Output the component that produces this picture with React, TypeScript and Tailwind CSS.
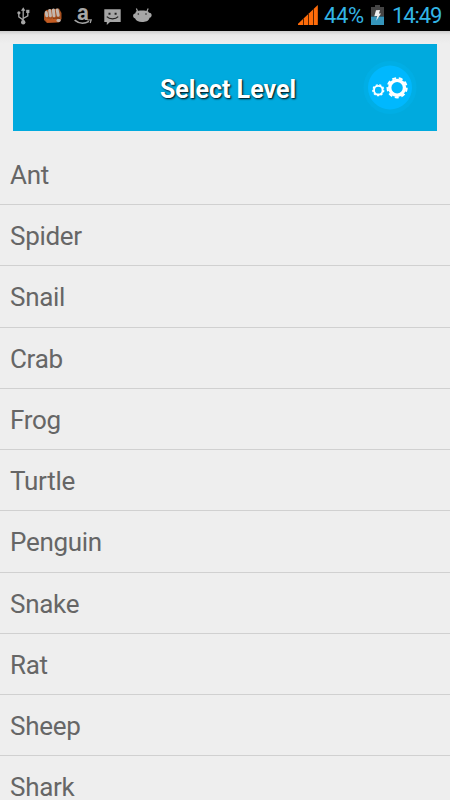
const levels = [
  "Ant",
  "Spider",
  "Snail",
  "Crab",
  "Frog",
  "Turtle",
  "Penguin",
  "Snake",
  "Rat",
  "Sheep",
  "Shark",
];

function UsbIcon() {
  return (
    <svg width="14" height="18" viewBox="0 0 14 18" fill="none" stroke="#a6a6a6" strokeWidth="1.3">
      <path d="M6.2 14V3M6.2 13L1.8 9.8V6M6.2 11.5L10.8 8.8V4.5" />
      <path d="M4 3.8L6.2 0.3L8.4 3.8Z" fill="#a6a6a6" stroke="none" />
      <circle cx="1.9" cy="5.8" r="1.6" fill="#a6a6a6" stroke="none" />
      <rect x="9.2" y="2.8" width="3.2" height="3.2" fill="#a6a6a6" stroke="none" />
      <circle cx="6.2" cy="15.2" r="2.2" fill="#a6a6a6" stroke="none" />
    </svg>
  );
}

function FistIcon() {
  return (
    <svg width="20" height="16" viewBox="0 0 20 16">
      <path d="M1 6L3 2L16 0.5L18.5 5V11L16 14.5L4 15L1 12Z" fill="#a8501f" />
      <path d="M2 10L8 11.5L12 9L14 14L4 14.5Z" fill="#c45c22" />
      <g stroke="#c3b6ad" strokeWidth="3" strokeLinecap="round">
        <path d="M3.2 4.5L3.8 7.8M6.7 2.5L7.4 7.8M10.4 2L11 7.8M14.2 2L15.2 7.3" />
      </g>
      <path d="M14.8 12.5H16.3" stroke="#c3b6ad" strokeWidth="2.8" strokeLinecap="round" />
      <path d="M10 10.5L15 9.8L17 10.5" stroke="#73330f" strokeWidth="0.8" fill="none" />
    </svg>
  );
}

function AmazonIcon() {
  return (
    <div className="flex w-[18px] flex-col">
      <span className="pl-[3px] font-[Roboto,sans-serif] text-[22px] font-bold leading-[11px] text-[#a6a6a6]">
        a
      </span>
      <svg className="mt-px" width="18" height="6" viewBox="0 0 18 6">
        <path d="M0.6 1.2C5 4.8 10.5 5 15 2.4" fill="none" stroke="#a6a6a6" strokeWidth="1.5" />
        <path d="M13.3 1L17.2 0.9L16.2 4" fill="none" stroke="#a6a6a6" strokeWidth="1.2" />
      </svg>
    </div>
  );
}

function MessageIcon() {
  return (
    <svg width="17" height="17" viewBox="0 0 17 17">
      <path d="M0.3 0.3H16.7V13H6L2.8 16V13H0.3Z" fill="#a6a6a6" />
      <path d="M4.5 3.8H6.5V5.8H4.5ZM10.6 3.8H12.6V5.8H10.6Z" fill="#222" />
      <path d="M2.8 7.6C5.5 10.6 11.5 10.6 14.2 7.6" fill="none" stroke="#222" strokeWidth="1.2" />
    </svg>
  );
}

function AndroidIcon() {
  return (
    <svg width="19" height="15" viewBox="0 0 19 15">
      <path
        d="M3 3.5C5 2.2 12.5 2.2 15 3.2L16 4.8C19.2 4.4 19.6 9.2 16.6 9.8C15.5 13.4 12.5 14 9 14C5.5 14 2.8 12.5 2.2 10.4C-0.7 9.8 -0.5 5.2 2.2 5.4Z"
        fill="#a6a6a6"
      />
      <path d="M4.8 4L3.4 0.6M13.6 4L15.2 0.6" stroke="#a6a6a6" strokeWidth="1.2" />
      <circle cx="5.3" cy="6" r="0.8" fill="#222" />
      <circle cx="13" cy="6" r="0.8" fill="#222" />
    </svg>
  );
}

function SignalIcon() {
  return (
    <svg width="20" height="20" viewBox="0 0 20 20">
      <path d="M0 20V18.8L19.8 0V20Z" fill="#ff6c0a" />
      <path d="M5.5 20V13M10.5 20V8.5M15.5 20V4" stroke="#5c2400" strokeWidth="1" />
    </svg>
  );
}

function BatteryIcon() {
  return (
    <svg width="13" height="20" viewBox="0 0 13 20">
      <path d="M4 0H9V2H13V11.5H0V2H4Z" fill="#444" />
      <path d="M0 11.5H13V20H0Z" fill="#3595bb" />
      <path d="M5 5.2L9 5L8 8.6L10 8.4L5.2 15.7L6.2 11L3.3 11.2Z" fill="#eee" />
    </svg>
  );
}

function GearsIcon() {
  return (
    <svg width="54" height="54" viewBox="0 0 54 54" fill="none" stroke="white">
      <circle cx="27" cy="26.5" r="26.5" fill="#00aee5" stroke="none" />
      <circle cx="27" cy="26.5" r="22" fill="#00b8fe" stroke="none" />
      {/* Small gear */}
      <circle cx="15.3" cy="29.2" r="4.3" strokeWidth="1.9" />
      <circle cx="15.3" cy="29.2" r="5.4" strokeWidth="1.4" pathLength="90" strokeDasharray="6 4" />
      {/* Large gear */}
      <circle cx="34.1" cy="26.8" r="7.4" strokeWidth="3.4" />
      <circle cx="34.1" cy="26.8" r="9.6" strokeWidth="2" pathLength="90" strokeDasharray="6 4" />
    </svg>
  );
}

export default function App() {
  return (
    <main className="h-[800px] w-full overflow-hidden bg-[#eeeeee] font-[Roboto,sans-serif]">
      {/* Status bar */}
      <div className="flex h-[31px] items-start bg-black text-[#33b5e5]">
        <div className="flex pl-[17px] pt-[7px]">
          <UsbIcon />
          <div className="ml-3 mt-px">
            <FistIcon />
          </div>
          <div className="ml-[11px]">
            <AmazonIcon />
          </div>
          <div className="ml-3 mt-[2px]">
            <MessageIcon />
          </div>
          <div className="ml-3 mt-px">
            <AndroidIcon />
          </div>
        </div>
        <div className="ml-auto flex pr-[8px] pt-[5px]">
          <SignalIcon />
          <span className="ml-[6px] w-[41px] whitespace-nowrap text-[22px] leading-[22px] tracking-[-0.4px]">44%</span>
          <div className="ml-[6px]">
            <BatteryIcon />
          </div>
          <span className="ml-[8px] w-[50px] whitespace-nowrap text-[22px] leading-[22px] tracking-[-1.1px]">14:49</span>
        </div>
      </div>

      <div className="h-[13px] bg-gradient-to-b from-[#cccccc] via-[#e8e8e8] via-30% to-[#eeeeee]" />

      {/* Header */}
      <header className="mx-[13px] grid h-[87px] grid-cols-[1fr_auto_1fr] items-center bg-[#00aade]">
        <h1 className="col-start-2 ml-[6px] pt-[4px] text-[25px] font-bold text-white [text-shadow:1px_1px_2px_#000]">
          Select Level
        </h1>
        <button className="mr-5 justify-self-end" aria-label="Settings">
          <GearsIcon />
        </button>
      </header>

      {/* Levels */}
      <ul className="pt-[12.8px]">
        {levels.map((level) => (
          <li
            key={level}
            className="flex h-[61.25px] items-center border-b border-[#d0d0d0] pl-[10px] pt-[3px] text-[26px] tracking-[-0.3px] text-[#666666]"
          >
            {level}
          </li>
        ))}
      </ul>
    </main>
  );
}
